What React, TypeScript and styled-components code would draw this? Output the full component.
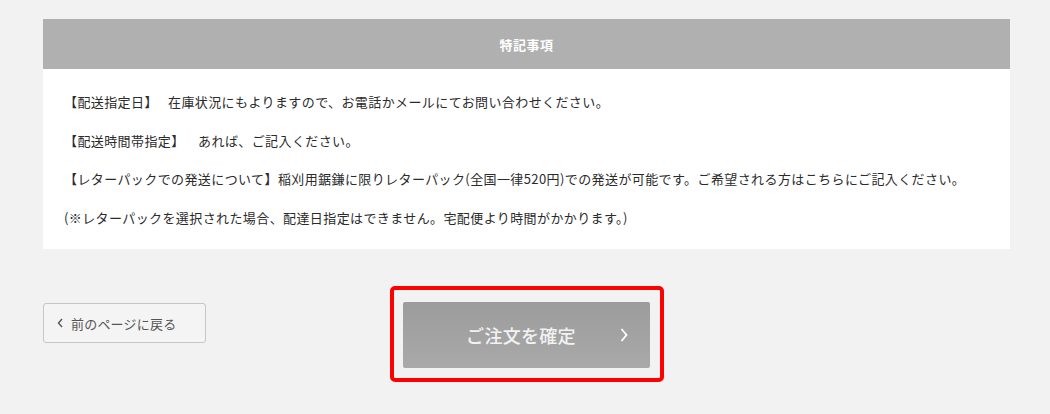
import styled, { createGlobalStyle } from 'styled-components';

// ── Global ────────────────────────────────────────────────────────────────────

const GlobalStyle = createGlobalStyle`
	html, body {
		margin: 0;
		padding: 0;
		background: #f2f2f2;
	}
	body {
		font-family: 'Noto Sans CJK JP', 'Noto Sans', sans-serif;
		color: #333;
	}
`;

// ── Layout ────────────────────────────────────────────────────────────────────

const Page = styled.div`
	min-height: 414px;
	background: #f2f2f2;
	padding: 19px 40px 0 43px;
	box-sizing: border-box;
`;

// ── Notes panel ───────────────────────────────────────────────────────────────

const Panel = styled.section`
	background: #fff;
`;

const PanelHeader = styled.h2`
	margin: 0;
	height: 50px;
	display: flex;
	align-items: center;
	justify-content: center;
	background: #b0b0b0;
	color: #fff;
	font-size: 13px;
	font-weight: 700;
	letter-spacing: 0.5px;
`;

const PanelBody = styled.div`
	padding: 14px 21px 12px;
`;

const Note = styled.p`
	margin: 0;
	font-size: 13px;
	line-height: 38.5px;
	letter-spacing: 0.4px;
	color: #2b2b2b;
	white-space: pre;
`;

// ── Actions ───────────────────────────────────────────────────────────────────

const Actions = styled.div`
	display: grid;
	grid-template-columns: 1fr auto 1fr;
	align-items: start;
	margin-top: 37px;
`;

const BackButton = styled.button`
	justify-self: start;
	margin-top: 17px;
	width: 163px;
	height: 40px;
	display: flex;
	align-items: center;
	gap: 8px;
	padding: 0 0 0 13px;
	background: #f4f4f4;
	border: 1px solid #c6c6c6;
	border-radius: 3px;
	color: #555;
	font-family: inherit;
	font-size: 13px;
	letter-spacing: 0.2px;
	cursor: pointer;
`;

const Highlight = styled.div`
	grid-column: 2;
	padding: 12px 10px 10px 9px;
	border: 4px solid #ff0000;
	border-radius: 5px;
`;

const ConfirmButton = styled.button`
	position: relative;
	width: 247px;
	height: 66px;
	display: flex;
	align-items: center;
	justify-content: center;
	padding: 0 10px 0 0;
	border: none;
	border-radius: 2px;
	background: linear-gradient(#9c9c9c, #a9a9a9);
	color: #f2f2f2;
	font-family: inherit;
	font-size: 18px;
	font-weight: 500;
	letter-spacing: 0.3px;
	cursor: pointer;
`;

const Chevron = styled.svg`
	position: absolute;
	right: 22px;
	top: 50%;
	margin-top: -7px;
`;

// ─────────────────────────────────────────────────────────────────────────────

export default function App() {
	return (
		<>
			<GlobalStyle />
			<Page>
				<Panel>
					<PanelHeader>特記事項</PanelHeader>
					<PanelBody>
						<Note>【配送指定日】　 在庫状況にもよりますので、お電話かメールにてお問い合わせください。</Note>
						<Note>【配送時間帯指定】　  あれば、ご記入ください。</Note>
						<Note>【レターパックでの発送について】稲刈用鋸鎌に限りレターパック(全国一律520円)での発送が可能です。ご希望される方はこちらにご記入ください。</Note>
						<Note>(※レターパックを選択された場合、配達日指定はできません。宅配便より時間がかかります。)</Note>
					</PanelBody>
				</Panel>

				<Actions>
					<BackButton>
						<svg width="6" height="10" viewBox="0 0 6 10" fill="none">
							<path d="M5 1L1.5 5L5 9" stroke="#555" strokeWidth="1.4" />
						</svg>
						前のページに戻る
					</BackButton>

					<Highlight>
						<ConfirmButton>
							ご注文を確定
							<Chevron width="8" height="14" viewBox="0 0 8 14" fill="none">
								<path d="M1.5 1L6.5 7L1.5 13" stroke="#fff" strokeWidth="1.8" />
							</Chevron>
						</ConfirmButton>
					</Highlight>
				</Actions>
			</Page>
		</>
	);
}
